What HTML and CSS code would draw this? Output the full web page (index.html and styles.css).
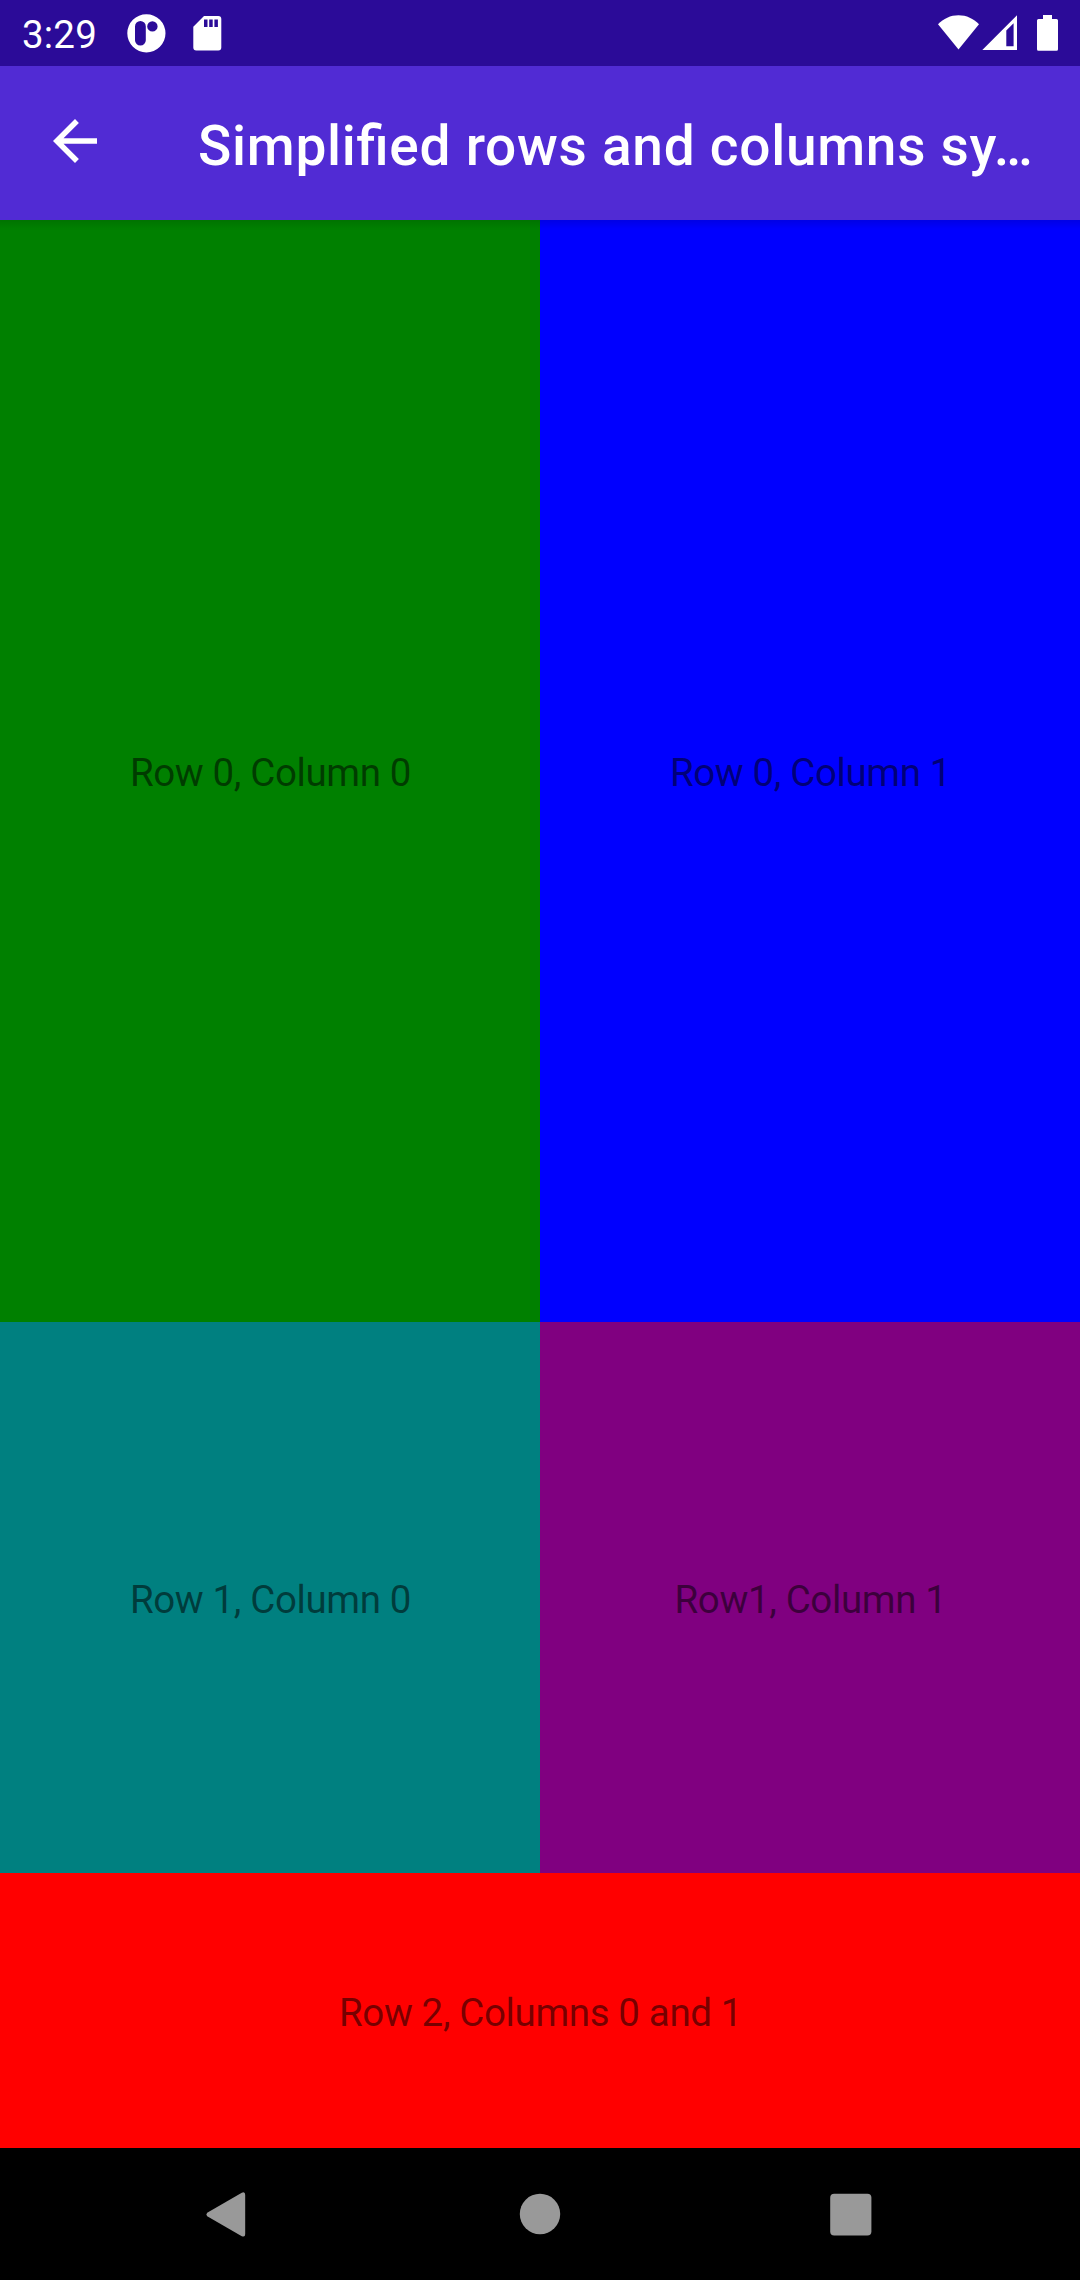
FILE: index.html
```html
<!DOCTYPE html>
<html lang="en">
<head>
<meta charset="utf-8">
<title>Simplified rows and columns syntax</title>
<link rel="stylesheet" href="styles.css">
</head>
<body>
<div class="screen">
  <header class="status-bar">
    <span class="clock">3:29</span>
    <svg class="notifications" width="100" height="66" viewBox="124 0 100 66" fill="#fff">
      <path fill-rule="evenodd" d="M146.4 14.2a19.1 19.1 0 1 1 0 38.2a19.1 19.1 0 1 1 0-38.2zM140.4 21a5.4 5.4 0 0 0-5.4 5.4v13.8a5.4 5.4 0 0 0 10.8 0V26.400a5.400 5.400 0 0 0-5.400-5.400zM152.400 21.200a5.200 5.200 0 1 0 0 10.400a5.200 5.200 0 1 0 0-10.400z"/>
      <path fill-rule="evenodd" d="M204 16h14.300a3 3 0 0 1 3 3v28.600a3 3 0 0 1-3 3h-22a3 3 0 0 1-3-3V26.700zM204 19.500v7.500h3.500v-7.500zM209.200 19.500v7.500h3.500v-7.500zM214.400 19.500v7.500h3.500v-7.500z"/>
    </svg>
    <svg class="indicators" width="124" height="66" viewBox="936 0 124 66" fill="#fff">
      <path d="M958.500 49.500L938 24.300C943.500 18.500 950.500 15.200 958.500 15.200S973.500 18.500 979 24.300z"/>
      <path fill-rule="evenodd" d="M982.300 50L1017 15.300V50zM1006.300 30.600V46.200H1013.600V23.300z"/>
      <path d="M1043 15h9v4h4.500a1.500 1.500 0 0 1 1.500 1.500v28.800a1.500 1.500 0 0 1-1.500 1.500h-18a1.500 1.500 0 0 1-1.500-1.500V20.500a1.500 1.500 0 0 1 1.500-1.500h4.500z"/>
    </svg>
  </header>
  <div class="app-bar">
    <svg class="back" width="66" height="66" viewBox="0 0 24 24" fill="#fff">
      <path d="M20 11H7.830l5.590-5.590L12 4l-8 8 8 8 1.410-1.410L7.830 13H20v-2z"/>
    </svg>
    <h1 class="title">Simplified rows and columns sy…</h1>
  </div>
  <main class="grid">
    <div class="cell green">Row 0, Column 0</div>
    <div class="cell blue">Row 0, Column 1</div>
    <div class="cell teal">Row 1, Column 0</div>
    <div class="cell purple">Row1, Column 1</div>
    <div class="cell red">Row 2, Columns 0 and 1</div>
  </main>
  <footer class="nav-bar">
    <svg width="1080" height="132" viewBox="0 2148 1080 132" fill="#999">
      <path d="M207.200 2212.700L241.800 2192.700Q245.200 2191.300 245.200 2195V2234Q245.200 2237.600 241.800 2236.200L207.200 2216.200Q205.400 2214.450 207.200 2212.700z"/>
      <circle cx="540" cy="2214" r="20.200"/>
      <rect x="830.200" y="2193.800" width="41.200" height="41.600" rx="4"/>
    </svg>
  </footer>
</div>
</body>
</html>
```
FILE: styles.css
```css
body {
  margin: 0;
  font-family: Roboto, "Liberation Sans", sans-serif;
}

.screen {
  display: flex;
  flex-direction: column;
  width: 1080px;
  height: 2280px;
}

svg {
  display: block;
  flex: none;
}

.status-bar {
  display: flex;
  align-items: center;
  height: 66px;
  padding: 0 20px 0 22px;
  background: #2b0b98;
  color: #fff;
}

.clock {
  width: 102px;
  padding-top: 3px;
  font-size: 38.5px;
  letter-spacing: 0.2px;
  line-height: 46px;
}

.indicators {
  margin-left: auto;
}

.app-bar {
  display: flex;
  align-items: center;
  height: 154px;
  padding-left: 42px;
  background: #512bd4;
  color: #fff;
}

.back {
  margin-bottom: 4px;
}

.title {
  margin: 6px 0 0 90px;
  font-size: 55px;
  font-weight: 500;
  font-feature-settings: "liga" 1;
  letter-spacing: 0.72px;
  line-height: 64px;
  white-space: nowrap;
}

.grid {
  display: grid;
  flex: 1;
  grid-template-columns: 1fr 1fr;
  grid-template-rows: 1102px 551px 275px;
  background-color: #000;
}

.cell {
  display: flex;
  align-items: center;
  justify-content: center;
  padding: 4px 0 0 1px;
  color: rgba(0, 0, 0, 0.54);
  font-size: 38.5px;
  letter-spacing: -0.37px;
  line-height: 46px;
}

.green {
  background: linear-gradient(rgba(0, 0, 0, 0.1), transparent 9px) #008000;
}

.blue {
  background: linear-gradient(rgba(0, 0, 0, 0.1), transparent 9px) #00f;
}

.teal {
  background: #008080;
}

.purple {
  background: #800080;
}

.red {
  grid-column: 1 / -1;
  background: #f00;
}

.nav-bar {
  height: 132px;
  background: #000;
}
```
